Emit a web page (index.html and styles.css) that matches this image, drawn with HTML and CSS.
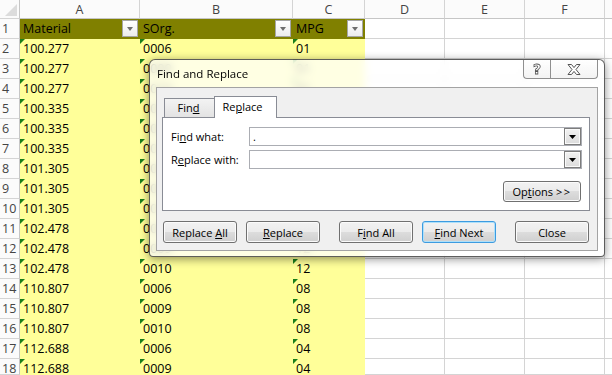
FILE: index.html
```html
<!DOCTYPE html>
<html lang="en">
<head>
    <meta charset="UTF-8">
    <meta name="viewport" content="width=device-width, initial-scale=1.0">
    <title>Find and Replace</title>
    <link rel="stylesheet" href="styles.css">
</head>
<body>
    <div class="sheet">
        <div class="row head">
            <div class="cell rh corner"></div>
            <div class="cell ch a">A</div>
            <div class="cell ch b">B</div>
            <div class="cell ch c">C</div>
            <div class="cell ch d">D</div>
            <div class="cell ch e">E</div>
            <div class="cell ch f">F</div>
            <div class="cell ch g"></div>
        </div>
        <div class="row">
            <div class="cell rh">1</div>
            <div class="cell a hdr">Material<span class="filter"></span></div>
            <div class="cell b hdr">SOrg.<span class="filter"></span></div>
            <div class="cell c hdr">MPG<span class="filter"></span></div>
            <div class="cell d"></div><div class="cell e"></div><div class="cell f"></div><div class="cell g"></div>
        </div>
        <div class="row">
            <div class="cell rh">2</div>
            <div class="cell a fill txt">100.277</div><div class="cell b fill txt">0006</div><div class="cell c fill txt">01</div>
            <div class="cell d"></div><div class="cell e"></div><div class="cell f"></div><div class="cell g"></div>
        </div>
        <div class="row">
            <div class="cell rh">3</div>
            <div class="cell a fill txt">100.277</div><div class="cell b fill txt">0009</div><div class="cell c fill txt">01</div>
            <div class="cell d"></div><div class="cell e"></div><div class="cell f"></div><div class="cell g"></div>
        </div>
        <div class="row">
            <div class="cell rh">4</div>
            <div class="cell a fill txt">100.277</div><div class="cell b fill txt">0010</div><div class="cell c fill txt">01</div>
            <div class="cell d"></div><div class="cell e"></div><div class="cell f"></div><div class="cell g"></div>
        </div>
        <div class="row">
            <div class="cell rh">5</div>
            <div class="cell a fill txt">100.335</div><div class="cell b fill txt">0006</div><div class="cell c fill txt">05</div>
            <div class="cell d"></div><div class="cell e"></div><div class="cell f"></div><div class="cell g"></div>
        </div>
        <div class="row">
            <div class="cell rh">6</div>
            <div class="cell a fill txt">100.335</div><div class="cell b fill txt">0009</div><div class="cell c fill txt">05</div>
            <div class="cell d"></div><div class="cell e"></div><div class="cell f"></div><div class="cell g"></div>
        </div>
        <div class="row">
            <div class="cell rh">7</div>
            <div class="cell a fill txt">100.335</div><div class="cell b fill txt">0010</div><div class="cell c fill txt">05</div>
            <div class="cell d"></div><div class="cell e"></div><div class="cell f"></div><div class="cell g"></div>
        </div>
        <div class="row">
            <div class="cell rh">8</div>
            <div class="cell a fill txt">101.305</div><div class="cell b fill txt">0006</div><div class="cell c fill txt">05</div>
            <div class="cell d"></div><div class="cell e"></div><div class="cell f"></div><div class="cell g"></div>
        </div>
        <div class="row">
            <div class="cell rh">9</div>
            <div class="cell a fill txt">101.305</div><div class="cell b fill txt">0009</div><div class="cell c fill txt">05</div>
            <div class="cell d"></div><div class="cell e"></div><div class="cell f"></div><div class="cell g"></div>
        </div>
        <div class="row">
            <div class="cell rh">10</div>
            <div class="cell a fill txt">101.305</div><div class="cell b fill txt">0010</div><div class="cell c fill txt">05</div>
            <div class="cell d"></div><div class="cell e"></div><div class="cell f"></div><div class="cell g"></div>
        </div>
        <div class="row">
            <div class="cell rh">11</div>
            <div class="cell a fill txt">102.478</div><div class="cell b fill txt">0006</div><div class="cell c fill txt">12</div>
            <div class="cell d"></div><div class="cell e"></div><div class="cell f"></div><div class="cell g"></div>
        </div>
        <div class="row">
            <div class="cell rh">12</div>
            <div class="cell a fill txt">102.478</div><div class="cell b fill txt">0009</div><div class="cell c fill txt">12</div>
            <div class="cell d"></div><div class="cell e"></div><div class="cell f"></div><div class="cell g"></div>
        </div>
        <div class="row">
            <div class="cell rh">13</div>
            <div class="cell a fill txt">102.478</div><div class="cell b fill txt">0010</div><div class="cell c fill txt">12</div>
            <div class="cell d"></div><div class="cell e"></div><div class="cell f"></div><div class="cell g"></div>
        </div>
        <div class="row">
            <div class="cell rh">14</div>
            <div class="cell a fill txt">110.807</div><div class="cell b fill txt">0006</div><div class="cell c fill txt">08</div>
            <div class="cell d"></div><div class="cell e"></div><div class="cell f"></div><div class="cell g"></div>
        </div>
        <div class="row">
            <div class="cell rh">15</div>
            <div class="cell a fill txt">110.807</div><div class="cell b fill txt">0009</div><div class="cell c fill txt">08</div>
            <div class="cell d"></div><div class="cell e"></div><div class="cell f"></div><div class="cell g"></div>
        </div>
        <div class="row">
            <div class="cell rh">16</div>
            <div class="cell a fill txt">110.807</div><div class="cell b fill txt">0010</div><div class="cell c fill txt">08</div>
            <div class="cell d"></div><div class="cell e"></div><div class="cell f"></div><div class="cell g"></div>
        </div>
        <div class="row">
            <div class="cell rh">17</div>
            <div class="cell a fill txt">112.688</div><div class="cell b fill txt">0006</div><div class="cell c fill txt">04</div>
            <div class="cell d"></div><div class="cell e"></div><div class="cell f"></div><div class="cell g"></div>
        </div>
        <div class="row last">
            <div class="cell rh">18</div>
            <div class="cell a fill txt">112.688</div><div class="cell b fill txt">0009</div><div class="cell c fill txt">04</div>
            <div class="cell d"></div><div class="cell e"></div><div class="cell f"></div><div class="cell g"></div>
        </div>
    </div>

    <div class="dialog">
        <div class="titlebar">
            <span class="title">Find and Replace</span>
            <div class="caption-btns">
                <div class="cap help"><span class="qmark">?</span></div>
                <div class="cap close">
                    <svg width="14" height="11" viewBox="0 0 14 11">
                        <polygon points="1,0.5 4.5,0.5 7,3.6 9.5,0.5 13,0.5 9,5.5 13,10.5 9.5,10.5 7,7.4 4.5,10.5 1,10.5 5,5.5" fill="#fff" stroke="#555" stroke-width="1"/>
                    </svg>
                </div>
            </div>
        </div>
        <div class="client">
            <div class="tabs">
                <div class="tab">Fin<u>d</u></div>
                <div class="tab active">Re<u>p</u>lace</div>
            </div>
            <div class="panel">
                <div class="field">
                    <label>Fi<u>n</u>d what:</label>
                    <div class="combo">
                        <span class="value">.</span>
                        <span class="arrow"><svg width="7" height="4" viewBox="0 0 7 4"><polygon points="0,0 7,0 3.5,4" fill="#000"/></svg></span>
                    </div>
                </div>
                <div class="field">
                    <label>R<u>e</u>place with:</label>
                    <div class="combo">
                        <span class="value"></span>
                        <span class="arrow"><svg width="7" height="4" viewBox="0 0 7 4"><polygon points="0,0 7,0 3.5,4" fill="#000"/></svg></span>
                    </div>
                </div>
                <div class="options-row">
                    <button class="btn options">Op<u>t</u>ions <span class="chev">&gt;&gt;</span></button>
                </div>
            </div>
            <div class="buttons">
                <button class="btn">Replace <u>A</u>ll</button>
                <button class="btn near"><u>R</u>eplace</button>
                <button class="btn far">F<u>i</u>nd All</button>
                <button class="btn near default"><u>F</u>ind Next</button>
                <button class="btn far">Close</button>
            </div>
        </div>
    </div>
</body>
</html>
```

FILE: styles.css
```css
body {
    margin: 0;
    width: 612px;
    height: 375px;
    overflow: hidden;
    background: #fff;
    font-family: "Open Sans", "Noto Sans", sans-serif;
    position: relative;
}

.row {
    display: flex;
    height: 20px;
}

.row.head {
    height: 19px;
}

.row.last {
    height: 16px;
}

.cell {
    box-sizing: border-box;
    flex: none;
    position: relative;
    height: 100%;
    border-right: 1px solid #d4d4d4;
    border-bottom: 1px solid #d4d4d4;
    padding-left: 3px;
    font-size: 12.5px;
    line-height: 20px;
    color: #000;
    white-space: nowrap;
    overflow: hidden;
}

.rh { width: 20px; padding-left: 2px; color: #444; background: #fbfbfb; border-right-color: #c6c6c6; }
.a { width: 120px; }
.b { width: 153px; }
.c { width: 72px; }
.d, .e, .f { width: 80px; }
.g { width: 7px; border-right: none; }

.ch {
    text-align: center;
    padding-left: 0;
    color: #444;
    background: #fbfbfb;
    line-height: 19px;
    border-bottom-color: #c6c6c6;
}

.corner::after {
    content: "";
    position: absolute;
    right: 2px;
    bottom: 2px;
    border-left: 12px solid transparent;
    border-bottom: 12px solid #dcdcdc;
}

.hdr {
    background: #808000;
    border-color: #808000;
}

.fill {
    background: #ffff99;
    border-color: #ffff99;
}

/* little green "number stored as text" marker */
.txt::before {
    content: "";
    position: absolute;
    left: 0;
    top: 0;
    border-top: 5px solid #1a7f1a;
    border-right: 5px solid transparent;
}

.filter {
    position: absolute;
    right: 1px;
    top: 1px;
    width: 16px;
    height: 17px;
    box-sizing: border-box;
    border: 1px solid #a6a6a6;
    background: linear-gradient(#ffffff, #ececec);
}

.filter::after {
    content: "";
    position: absolute;
    left: 4px;
    top: 6px;
    border-left: 3.5px solid transparent;
    border-right: 3.5px solid transparent;
    border-top: 4px solid #6e6e6e;
}

/* dialog */
.dialog {
    position: absolute;
    left: 149px;
    top: 59px;
    width: 456px;
    height: 198px;
    box-sizing: border-box;
    border: 1px solid rgba(40, 40, 40, 0.75);
    border-radius: 6px 6px 4px 4px;
    background: rgba(255, 255, 255, 0.72);
    backdrop-filter: blur(4px);
    box-shadow: 0 2px 10px rgba(0, 0, 0, 0.45);
    padding: 0 6px 5px 6px;
    display: flex;
    flex-direction: column;
    font-family: "Open Sans", "Noto Sans", sans-serif;
    font-size: 11px;
    color: #000;
}

.titlebar {
    height: 27px;
    display: flex;
    align-items: flex-start;
    flex: none;
}

.title {
    padding-left: 1px;
    line-height: 28px;
    font-size: 11.5px;
}

.caption-btns {
    margin-left: auto;
    display: flex;
}

.cap {
    box-sizing: border-box;
    height: 19px;
    border: 1px solid #8f8f8f;
    border-top: none;
    background: linear-gradient(rgba(255, 255, 255, 0.5), rgba(235, 235, 235, 0.6));
    display: flex;
    align-items: center;
    justify-content: center;
}

.help {
    width: 27px;
    border-radius: 0 0 0 4px;
    border-right: none;
}

.close {
    width: 48px;
    border-radius: 0 0 4px 0;
}

.qmark {
    font-family: "DejaVu Sans", sans-serif;
    font-weight: bold;
    font-size: 14px;
    line-height: 14px;
    color: #fff;
    -webkit-text-stroke: 0.8px #555;
}

.client {
    flex: 1;
    background: #f0f0f0;
    border: 1px solid #a3a3a3;
    padding: 8px 7px 0 5px;
}

.tabs {
    display: flex;
    align-items: flex-end;
    height: 21px;
    padding-left: 2px;
}

.tab {
    box-sizing: border-box;
    width: 51px;
    height: 19px;
    border: 1px solid #898c95;
    border-bottom: none;
    background: linear-gradient(#f3f3f3, #e3e3e3);
    text-align: center;
    line-height: 18px;
    padding-right: 2px;
}

.tab.active {
    width: 63px;
    height: 22px;
    margin-left: -1px;
    margin-bottom: -1px;
    background: #fff;
    position: relative;
    z-index: 1;
    line-height: 20px;
    padding-right: 6px;
}

.panel {
    box-sizing: border-box;
    width: 428px;
    height: 94px;
    background: #fff;
    border: 1px solid #898c95;
    padding: 9px 7px 0 8px;
    display: flex;
    flex-direction: column;
    gap: 4px;
}

.field {
    display: flex;
    align-items: center;
    height: 19px;
}

.field label {
    width: 78px;
    flex: none;
}

.combo {
    box-sizing: border-box;
    flex: 1;
    height: 19px;
    border: 1px solid #abadb3;
    display: flex;
    align-items: center;
}

.value {
    padding-left: 3px;
    flex: 1;
}

.arrow {
    box-sizing: border-box;
    width: 17px;
    height: 17px;
    border: 1px solid #7d7d7d;
    background: linear-gradient(#f2f2f2, #dcdcdc);
    display: flex;
    align-items: center;
    justify-content: center;
    box-shadow: inset 0 0 0 1px #fafafa;
}

.options-row {
    display: flex;
    justify-content: flex-end;
    margin-top: 8px;
    padding-right: 1px;
}

.btn {
    box-sizing: border-box;
    width: 74px;
    height: 22px;
    border: 1px solid #707070;
    border-radius: 3px;
    background: linear-gradient(#f2f2f2 0%, #ebebeb 50%, #dddddd 50%, #cfcfcf 100%);
    box-shadow: inset 0 0 0 1px #fbfbfb;
    font-family: "Open Sans", "Noto Sans", sans-serif;
    font-size: 11px;
    color: #000;
    padding: 0;
}

.btn.options {
    width: 78px;
    height: 21px;
}

.chev {
    letter-spacing: 1.5px;
}

.btn.default {
    border-color: #3c9be0;
    box-shadow: inset 0 0 0 1px #aee0fa;
}

.buttons {
    display: flex;
    margin-top: 10px;
    padding-left: 1px;
}

.btn.near { margin-left: 9px; }
.btn.far { margin-left: 19px; }
```
